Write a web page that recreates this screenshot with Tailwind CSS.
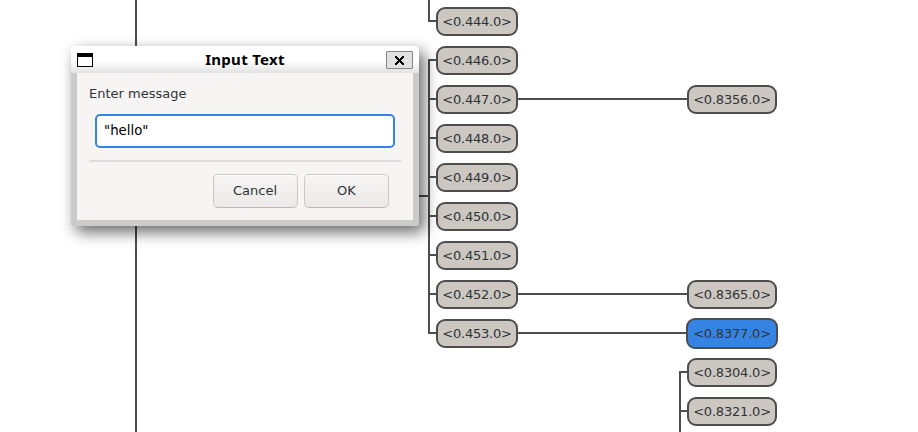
<!DOCTYPE html>
<html lang="en">
<head>
<meta charset="utf-8">
<title>Input Text</title>
<script src="https://cdn.jsdelivr.net/npm/@tailwindcss/browser@4"></script>
</head>
<body class="bg-white">
<main class="relative w-[918px] h-[432px] overflow-hidden bg-white font-['DejaVu_Sans',sans-serif] text-[13px] leading-[16px] text-[#2e3436]">
  <!-- Process tree connectors -->
  <svg class="absolute inset-0" width="918" height="432" fill="none" stroke="#4d4d4d" stroke-width="2">
    <path d="M136 0V432M429 0V21H437M437 60H429V333H437M429 99H437M429 138H437M429 177H437M429 216H437M429 255H437M429 294H437M400 196H429M517 99H688M517 294H688M517 333H688M688 372H680V432M680 411H688"/>
  </svg>
  <!-- Process nodes -->
  <div class="absolute left-[436px] top-[7px] w-[82px] flex flex-col gap-[10px] tracking-[-0.2px] *:h-[29px] *:rounded-[9px] *:border-2 *:border-[#4d4d4d] *:bg-[#cdc7c2] *:flex *:items-center *:justify-center *:whitespace-nowrap">
    <div>&lt;0.444.0&gt;</div>
    <div>&lt;0.446.0&gt;</div>
    <div>&lt;0.447.0&gt;</div>
    <div>&lt;0.448.0&gt;</div>
    <div>&lt;0.449.0&gt;</div>
    <div>&lt;0.450.0&gt;</div>
    <div>&lt;0.451.0&gt;</div>
    <div>&lt;0.452.0&gt;</div>
    <div>&lt;0.453.0&gt;</div>
  </div>
  <div class="absolute left-[687px] top-[85px] w-[90px] h-[29px] rounded-[9px] border-2 border-[#4d4d4d] bg-[#cdc7c2] flex items-center justify-center tracking-[-0.2px]">&lt;0.8356.0&gt;</div>
  <div class="absolute left-[687px] top-[280px] w-[90px] h-[29px] rounded-[9px] border-2 border-[#4d4d4d] bg-[#cdc7c2] flex items-center justify-center tracking-[-0.2px]">&lt;0.8365.0&gt;</div>
  <div class="absolute left-[686px] top-[318px] w-[92px] h-[31px] rounded-[9px] border-2 border-[#4d4d4d] bg-[#3584e4] flex items-center justify-center tracking-[-0.2px]">&lt;0.8377.0&gt;</div>
  <div class="absolute left-[687px] top-[358px] w-[90px] h-[29px] rounded-[9px] border-2 border-[#4d4d4d] bg-[#cdc7c2] flex items-center justify-center tracking-[-0.2px]">&lt;0.8304.0&gt;</div>
  <div class="absolute left-[687px] top-[397px] w-[90px] h-[29px] rounded-[9px] border-2 border-[#4d4d4d] bg-[#cdc7c2] flex items-center justify-center tracking-[-0.2px]">&lt;0.8321.0&gt;</div>

  <!-- Dialog window -->
  <section class="absolute left-[71px] top-[46px] w-[348px] h-[180px] flex flex-col rounded-[3px] bg-[#cbcbcb] shadow-[5px_6px_15px_0_rgba(0,0,0,0.6)]">
    <header class="h-[27px] shrink-0 flex items-center px-[6px] rounded-t-[3px] bg-linear-to-b from-white from-55% to-[#e2e2e2]">
      <svg class="mt-[1px]" width="16" height="14" shape-rendering="crispEdges"><path d="M0 0H16V14H0Z" fill="#000"/><path d="M1 4H15V13H1Z" fill="#fff"/></svg>
      <h1 class="flex-1 pl-[11px] text-center font-['Noto_Sans',sans-serif] font-bold text-[15px] tracking-[0.3px] leading-[20px] text-black -mt-[1px]">Input Text</h1>
      <button class="mt-[1px] w-[27px] h-[18px] rounded-[1px] border border-[#858585] bg-[#e1e1e1] flex items-center justify-center">
        <svg class="mt-[1px]" width="9" height="9" viewBox="0 0 9 9" fill="#000" shape-rendering="crispEdges"><path d="M0 0H2V1H3V2H4V3H5V2H6V1H7V0H9V2H8V3H7V4H6V5H7V6H8V7H9V9H7V8H6V7H5V6H4V7H3V8H2V9H0V7H1V6H2V5H3V4H2V3H1V2H0Z"/></svg>
      </button>
    </header>
    <div class="mx-[6px] h-[147px] bg-[#f6f5f4] px-[12px] pt-[13px]">
      <label class="block h-[16px]">Enter message</label>
      <div class="mt-[12px] ml-[6px] w-[300px] h-[34px] rounded-[5px] border-2 border-[#3584e4] bg-white pl-[7px] pt-[7px] text-[13.333px] text-black">"hello"</div>
      <div class="mt-[12px] h-[2px] bg-[#deddda]"></div>
      <div class="mt-[12px] flex gap-[6px] justify-end pr-[12px]">
        <button class="w-[85px] h-[34px] rounded-[5px] border border-[#cdc7c2] border-b-[#bfb8b1] bg-linear-to-b from-[#f6f5f4] to-[#eae9e7] shadow-[inset_0_1px_#fff] pr-[1px]">Cancel</button>
        <button class="w-[85px] h-[34px] rounded-[5px] border border-[#cdc7c2] border-b-[#bfb8b1] bg-linear-to-b from-[#f6f5f4] to-[#eae9e7] shadow-[inset_0_1px_#fff]">OK</button>
      </div>
    </div>
  </section>
</main>
</body>
</html>
